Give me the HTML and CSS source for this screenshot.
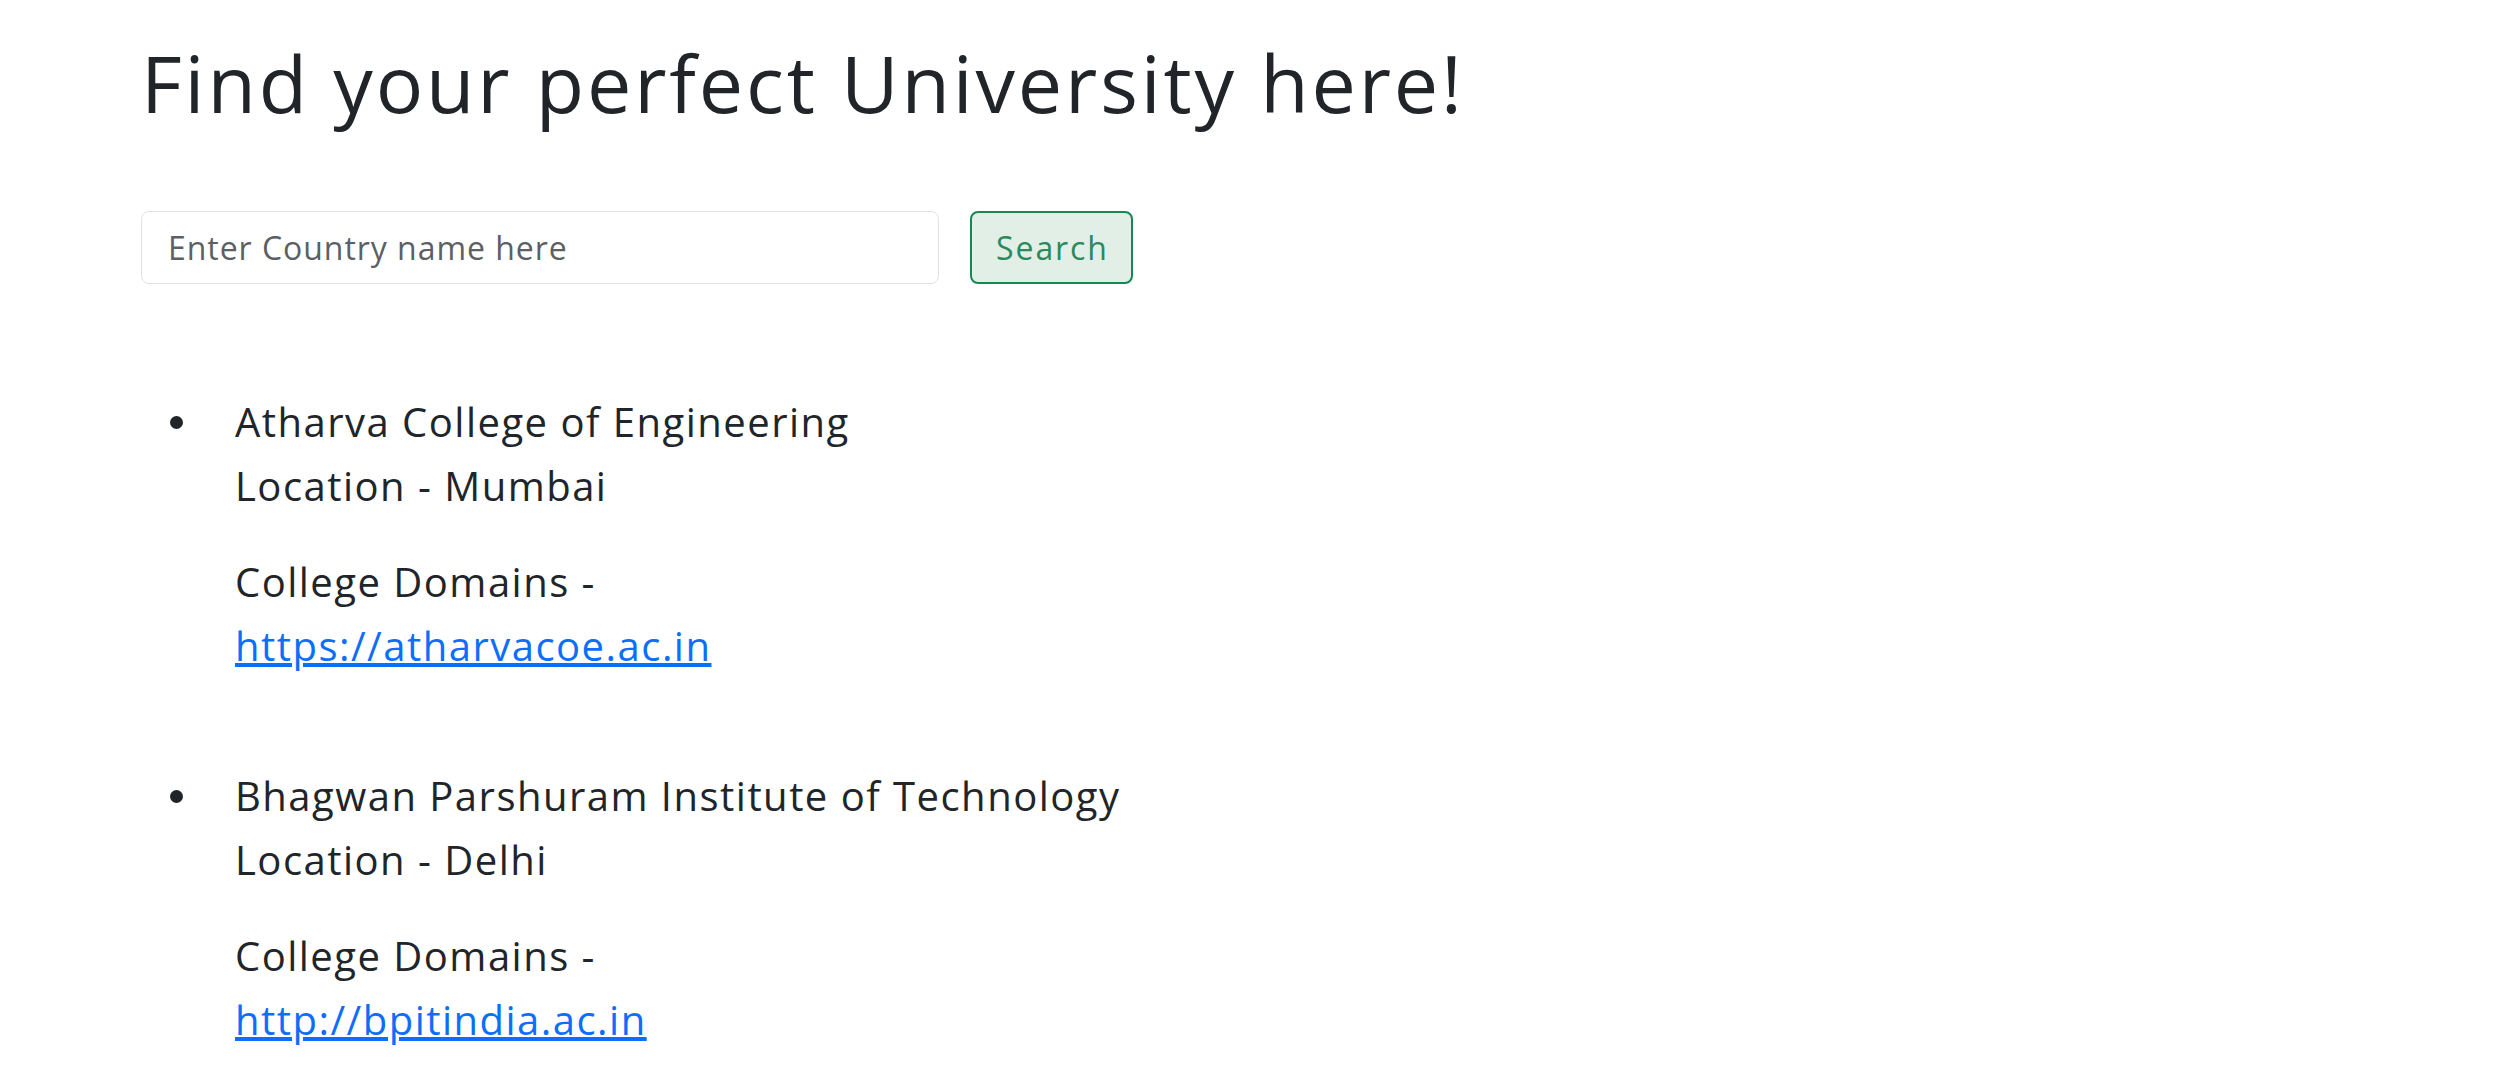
FILE: index.html
```html
<!DOCTYPE html>
<html lang="en">
<head>
<meta charset="utf-8">
<title>University Finder</title>
<link rel="stylesheet" href="styles.css">
</head>
<body>
<main class="page">
  <h1 class="title">Find your perfect University here!</h1>
  <form class="search">
    <input class="search-input" type="text" placeholder="Enter Country name here">
    <button class="search-btn" type="button">Search</button>
  </form>
  <ul class="unis">
    <li class="uni">
      <div class="uni-body">
        <p>Atharva College of Engineering<br>Location - Mumbai</p>
        <p>College Domains -<br><a href="#">https://atharvacoe.ac.in</a></p>
      </div>
    </li>
    <li class="uni">
      <div class="uni-body">
        <p>Bhagwan Parshuram Institute of Technology<br>Location - Delhi</p>
        <p>College Domains -<br><a href="#">http://bpitindia.ac.in</a></p>
      </div>
    </li>
  </ul>
</main>
</body>
</html>
```

FILE: styles.css
```css
* { box-sizing: border-box; }
html, body { margin: 0; background: #fff; }
body {
  font-family: "Open Sans", "Liberation Sans", sans-serif;
  color: #212529;
}
.page {
  padding: 35px 0 0 141px;
}
.title {
  margin: 0;
  font-size: 79px;
  line-height: 95px;
  font-weight: 400;
  letter-spacing: 0.036em;
  color: #212529;
}
.search {
  display: flex;
  gap: 31px;
  margin-top: 81px;
}
.search-input {
  width: 798px;
  height: 73px;
  border: 1px solid #dee2e6;
  border-radius: 8px;
  padding: 0 26px;
  font-family: inherit;
  font-size: 32px;
  letter-spacing: 0.03em;
  color: #212529;
  background: #fff;
  outline: none;
}
.search-input::placeholder { color: #5c5f63; }
.search-btn {
  width: 163px;
  height: 73px;
  border: 2px solid #198754;
  border-radius: 8px;
  background: #e2efe7;
  color: #2a8a5c;
  font-family: inherit;
  font-size: 32px;
  letter-spacing: 0.06em;
  padding: 0 0 0 2px;
}
.unis {
  list-style: none;
  margin: 106px 0 0;
  padding: 0;
  display: flex;
  flex-direction: column;
  gap: 86px;
}
.uni {
  display: grid;
  grid-template-columns: 94px 1fr;
  align-items: start;
}
.uni::before {
  content: "";
  width: 13px;
  height: 13px;
  border-radius: 50%;
  background: #212529;
  margin: 26px 0 0 29px;
}
.uni-body {
  display: flex;
  flex-direction: column;
  gap: 32px;
}
.uni-body p {
  margin: 0;
  font-size: 40px;
  line-height: 64px;
  letter-spacing: 0.037em;
}
.uni-body a {
  color: #0d6efd;
  text-decoration: underline;
}
```
